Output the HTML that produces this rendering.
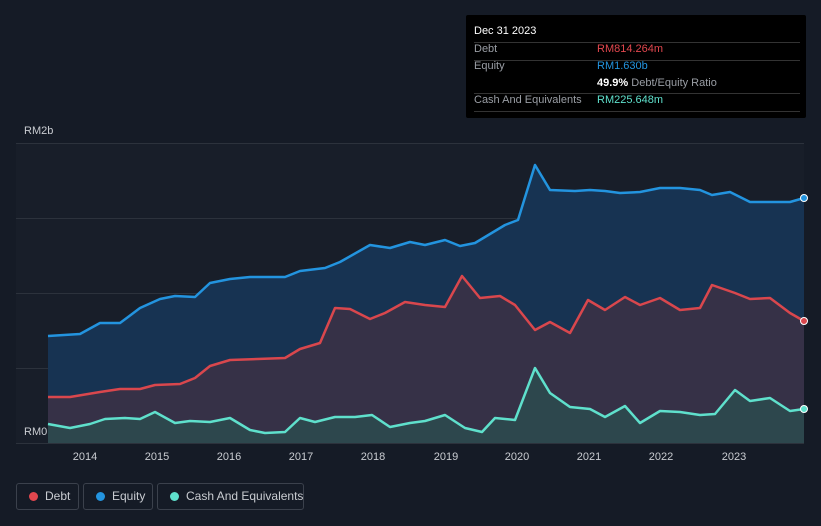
<!DOCTYPE html>
<html><head><style>
html,body{margin:0;padding:0}
body{background:#151b26;width:821px;height:526px;overflow:hidden;font-family:"Liberation Sans",sans-serif;position:relative}
.tt{position:absolute;left:466px;top:15px;width:340px;height:103px;background:#000;border-radius:2px}
.tt div{position:absolute;font-size:11px;white-space:nowrap}
.ln{position:absolute;left:8px;width:326px;height:1px;background:#333}
.lg{position:absolute;top:483px;height:27px;border:1px solid #3b414c;border-radius:3px;color:#c9ccd1;font-size:12px;line-height:25px;box-sizing:border-box;white-space:nowrap}
.lg i{position:absolute;left:12px;top:8px;width:9px;height:9px;border-radius:50%}
</style></head><body>
<svg width="821" height="526" style="position:absolute;left:0;top:0">
<rect x="16" y="143" width="788" height="300" fill="#181e29"/>
<g stroke="#2c323c" stroke-width="1">
<line x1="16" y1="143.5" x2="804" y2="143.5"/><line x1="16" y1="218.5" x2="804" y2="218.5"/><line x1="16" y1="293.5" x2="804" y2="293.5"/><line x1="16" y1="368.5" x2="804" y2="368.5"/><line x1="16" y1="443.5" x2="804" y2="443.5"/>
</g>
<polygon fill="#173352" points="48,336 80,334 100,323 120,323 140,308 160,299 175,296 195,297 210,283 230,279 250,277 285,277 300,271 325,268 340,262 370,245 390,248 410,242 425,245 445,240 460,246 475,243 490,234 505,225 518,220 535,165 550,190 575,191 590,190 605,191 620,193 640,192 660,188 680,188 700,190 712,195 730,192 750,202 770,202 790,202 804,198 804,443 48,443"/>
<polygon fill="#3a3146" opacity=".9" points="48,397 70,397 100,392 120,389 140,389 155,385 180,384 195,378 210,366 230,360 285,358 300,349 320,343 335,308 350,309 370,319 385,313 405,302 425,305 445,307 462,276 480,298 500,296 515,305 535,330 550,322 570,333 588,300 605,310 625,297 640,305 660,298 680,310 700,308 712,285 735,293 750,299 770,298 790,313 804,321 804,443 48,443"/>
<polygon fill="#2c4a4e" opacity=".9" points="48,424 70,428 90,424 105,419 125,418 140,419 155,412 175,423 190,421 210,422 230,418 250,430 265,433 285,432 300,418 315,422 335,417 355,417 372,415 390,427 410,423 425,421 445,415 465,428 482,432 495,418 515,420 535,368 550,393 570,407 590,409 605,417 625,406 640,423 660,411 680,412 700,415 715,414 735,390 750,401 770,398 790,411 804,409 804,443 48,443"/>
<g fill="none" stroke-width="2.5" stroke-linejoin="round">
<polyline stroke="#2394df" points="48,336 80,334 100,323 120,323 140,308 160,299 175,296 195,297 210,283 230,279 250,277 285,277 300,271 325,268 340,262 370,245 390,248 410,242 425,245 445,240 460,246 475,243 490,234 505,225 518,220 535,165 550,190 575,191 590,190 605,191 620,193 640,192 660,188 680,188 700,190 712,195 730,192 750,202 770,202 790,202 804,198"/>
<polyline stroke="#d9474d" points="48,397 70,397 100,392 120,389 140,389 155,385 180,384 195,378 210,366 230,360 285,358 300,349 320,343 335,308 350,309 370,319 385,313 405,302 425,305 445,307 462,276 480,298 500,296 515,305 535,330 550,322 570,333 588,300 605,310 625,297 640,305 660,298 680,310 700,308 712,285 735,293 750,299 770,298 790,313 804,321"/>
<polyline stroke="#5fe0cc" points="48,424 70,428 90,424 105,419 125,418 140,419 155,412 175,423 190,421 210,422 230,418 250,430 265,433 285,432 300,418 315,422 335,417 355,417 372,415 390,427 410,423 425,421 445,415 465,428 482,432 495,418 515,420 535,368 550,393 570,407 590,409 605,417 625,406 640,423 660,411 680,412 700,415 715,414 735,390 750,401 770,398 790,411 804,409"/>
</g>
<circle cx="804" cy="198" r="3.5" fill="#2394df" stroke="#fff" stroke-width="1"/>
<circle cx="804" cy="321" r="3.5" fill="#d9474d" stroke="#fff" stroke-width="1"/>
<circle cx="804" cy="409" r="3.5" fill="#5fe0cc" stroke="#fff" stroke-width="1"/>
<g fill="#c9ccd1" font-size="11" font-family="Liberation Sans,sans-serif">
<text x="24" y="134">RM2b</text><text x="24" y="435">RM0</text>
</g>
<g fill="#c9ccd1" font-size="11" font-family="Liberation Sans,sans-serif" text-anchor="middle">
<text x="85" y="460">2014</text><text x="157" y="460">2015</text><text x="229" y="460">2016</text><text x="301" y="460">2017</text><text x="373" y="460">2018</text><text x="446" y="460">2019</text><text x="517" y="460">2020</text><text x="589" y="460">2021</text><text x="661" y="460">2022</text><text x="734" y="460">2023</text>
</g>
</svg>
<div class="tt">
<div style="left:8px;top:10px;color:#fff">Dec 31 2023</div>
<div class="ln" style="top:27px"></div>
<div style="left:8px;top:28px;color:#9a9ea5">Debt</div><div style="left:131px;top:28px;color:#e2474e">RM814.264m</div>
<div class="ln" style="top:45px"></div>
<div style="left:8px;top:45px;color:#9a9ea5">Equity</div><div style="left:131px;top:45px;color:#2394df">RM1.630b</div>
<div style="left:131px;top:62px;color:#fff"><b>49.9%</b> <span style="color:#9a9ea5">Debt/Equity Ratio</span></div>
<div class="ln" style="top:78px"></div>
<div style="left:8px;top:79px;color:#9a9ea5">Cash And Equivalents</div><div style="left:131px;top:79px;color:#5fe0cc">RM225.648m</div>
<div class="ln" style="top:96px"></div>
</div>
<div class="lg" style="left:16px;width:63px"><i style="background:#e2474e"></i><span style="position:absolute;left:28px">Debt</span></div>
<div class="lg" style="left:83px;width:70px"><i style="background:#2394df"></i><span style="position:absolute;left:28px">Equity</span></div>
<div class="lg" style="left:157px;width:147px"><i style="background:#5fe0cc"></i><span style="position:absolute;left:28px">Cash And Equivalents</span></div>
</body></html>
